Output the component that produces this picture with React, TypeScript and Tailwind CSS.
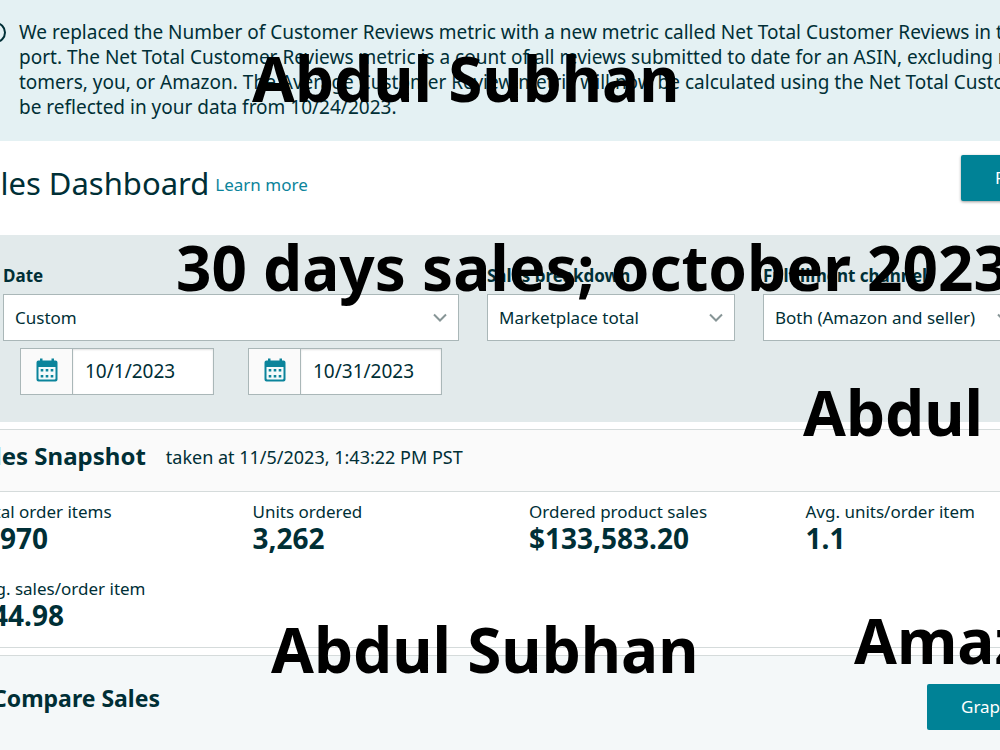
import React from "react";

function Chevron() {
  return (
    <svg
      className="pointer-events-none absolute top-1/2 right-3 -translate-y-1/2"
      width="14"
      height="10"
      viewBox="0 0 14 10"
      fill="none"
      stroke="#879596"
      strokeWidth="2"
      aria-hidden="true"
    >
      <path d="M1 1.5 7 7.5 13 1.5" />
    </svg>
  );
}

function CalendarIcon() {
  return (
    <svg className="mb-1" width="22" height="24" viewBox="0 0 22 24" aria-hidden="true">
      <path
        fill="#0b849b"
        d="M4 .5h2.500v2h9V.5H18v2h1.500a2 2 0 0 1 2 2V21.500a2 2 0 0 1-2 2h-17a2 2 0 0 1-2-2V4.500a2 2 0 0 1 2-2H4z"
      />
      <path fill="#f4fafb" d="M2.500 9h17V20.500a1 1 0 0 1-1 1h-15a1 1 0 0 1-1-1z" />
      <path
        fill="#0b849b"
        d="M4.700 11h2.600v2.600H4.700zM9.700 11h2.600v2.600H9.700zM14.700 11h2.600v2.600h-2.600zM4.700 17h2.600v2.600H4.700zM9.700 17h2.600v2.600H9.700zM14.700 17h2.600v2.600h-2.600z"
      />
    </svg>
  );
}

function SelectField({ id, label, options }: { id: string; label: string; options: string[] }) {
  return (
    <div>
      <label htmlFor={id} className="block pb-1.5 text-[17px] leading-6 font-bold">
        {label}
      </label>
      <div className="relative">
        <select
          id={id}
          className="h-[47px] w-full appearance-none border border-[#aab7b8] bg-white pl-[11px] text-[17px]"
        >
          {options.map((o) => (
            <option key={o}>{o}</option>
          ))}
        </select>
        <Chevron />
      </div>
    </div>
  );
}

function DateField({ label, value }: { label: string; value: string }) {
  return (
    <div className="flex h-[47px] w-[194px] border border-[#aab7b8] bg-white">
      <button
        type="button"
        aria-label={`Open ${label} calendar`}
        className="flex w-[52px] shrink-0 items-center justify-center border-r border-[#aab7b8] bg-[#fafafa]"
      >
        <CalendarIcon />
      </button>
      <input
        type="text"
        aria-label={label}
        defaultValue={value}
        className="w-full min-w-0 bg-white pl-3 text-[19px] shadow-[inset_0_1px_2px_rgba(0,0,0,0.12)]"
      />
    </div>
  );
}

function Metric({ label, value }: { label: string; value: string }) {
  return (
    <div className="whitespace-nowrap">
      <dt className="text-[17px] leading-6">{label}</dt>
      <dd className="text-[28px] leading-7 font-bold">{value}</dd>
    </div>
  );
}

const mark =
  "pointer-events-none absolute text-[62px] leading-[76px] font-bold whitespace-nowrap text-black";

export default function App() {
  return (
    <div className="relative min-h-screen overflow-hidden bg-white font-['Noto_Sans',sans-serif] text-[#002f36]">
      <section className="-ml-[15px] flex h-[141px] gap-[13px] bg-[#e4f1f3] pt-5 text-[19px] leading-[25px]">
        <svg className="mt-0.5 shrink-0" width="21" height="21" viewBox="0 0 21 21" fill="none" stroke="#002f36" strokeWidth="2" aria-hidden="true">
          <circle cx="10.500" cy="10.500" r="9.500" />
          <path d="M10.500 9v6M10.500 5v2" />
        </svg>
        <p className="whitespace-nowrap">
          We replaced the Number of Customer Reviews metric with a new metric called Net Total Customer Reviews in the re
          <br />
          port. The Net Total Customer Reviews metric is a count of all reviews submitted to date for an ASIN, excluding reviews
          <br />
          tomers, you, or Amazon. The Average Customer Review metric will now be calculated using the Net Total Customer
          <br />
          be reflected in your data from 10/24/2023.
        </p>
      </section>

      <header className="-mr-16 -ml-[34px] flex h-[94px] items-start justify-between pt-3.5">
        <div className="flex items-center gap-1.5 pt-1.5">
          <h1 className="text-[31px] leading-[44px]">Sales Dashboard</h1>
          <a href="#learn" className="pt-1 text-[17px] text-[#0b849b]">
            Learn more
          </a>
        </div>
        <button
          type="button"
          className="h-[46px] w-[103px] rounded-xs bg-[#008296] pl-[34px] text-left text-[17px] text-white shadow-[0_1px_3px_rgba(0,0,0,0.4)]"
        >
          Print
        </button>
      </header>

      <section className="h-[187px] bg-[#e2eaeb] pt-[29px]">
        <div className="-mr-[23px] ml-[3px] grid grid-cols-[456fr_248fr_260fr] gap-7">
          <SelectField id="date" label="Date" options={["Custom"]} />
          <SelectField id="breakdown" label="Sales breakdown" options={["Marketplace total"]} />
          <SelectField id="channel" label="Fulfillment channel" options={["Both (Amazon and seller)"]} />
        </div>
        <div className="mt-[7px] ml-5 flex gap-[34px]">
          <DateField label="Start date" value="10/1/2023" />
          <DateField label="End date" value="10/31/2023" />
        </div>
      </section>

      <section className="mt-[7px] border-y border-[#d5dbdb]">
        <div className="-ml-[33px] flex h-[62px] items-center gap-5 border-b border-[#d5dbdb] bg-[#fafafa] pb-2.5">
          <h2 className="text-[24px] font-bold">Sales Snapshot</h2>
          <p className="pt-1 text-[18px]">taken at 11/5/2023, 1:43:22 PM PST</p>
        </div>
        <dl className="-mr-[82px] -ml-6 grid grid-cols-4 gap-y-[25px] pt-2 pb-[18px]">
          <Metric label="Total order items" value="2,970" />
          <Metric label="Units ordered" value="3,262" />
          <Metric label="Ordered product sales" value="$133,583.20" />
          <Metric label="Avg. units/order item" value="1.1" />
          <Metric label="Avg. sales/order item" value="$44.98" />
        </dl>
      </section>

      <section className="mt-[7px] -mr-16 -ml-2 flex min-h-[96px] items-start justify-between border-t border-[#d5dbdb] bg-[#f4f8f9] pt-7">
        <h2 className="text-[23px] leading-[28px] font-bold">Compare Sales</h2>
        <button
          type="button"
          className="h-[46px] w-[137px] rounded-xs bg-[#008296] pl-[34px] text-left text-[17px] text-white"
        >
          Graph view
        </button>
      </section>

      <div className={`${mark} top-[40px] left-[252px]`}>Abdul Subhan</div>
      <div className={`${mark} top-[229px] left-[176px]`}>30 days sales; october 2023</div>
      <div className={`${mark} top-[374px] left-[803px]`}>Abdul Subhan</div>
      <div className={`${mark} top-[611px] left-[271px]`}>Abdul Subhan</div>
      <div className={`${mark} top-[602px] left-[854px]`}>Amazon</div>
    </div>
  );
}
